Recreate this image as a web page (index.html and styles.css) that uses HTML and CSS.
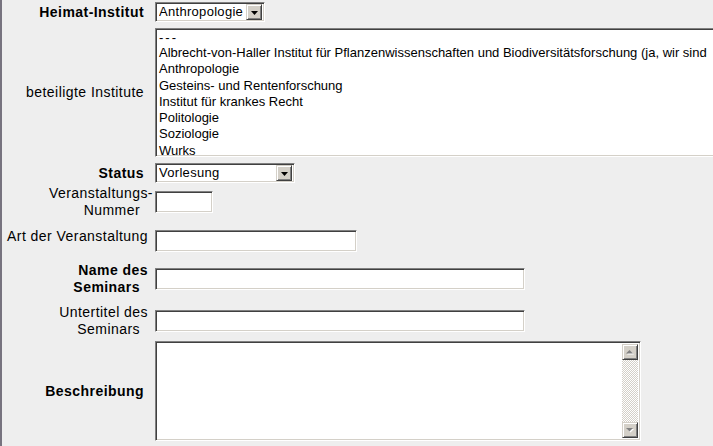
FILE: index.html
```html
<!DOCTYPE html>
<html lang="de">
<head>
<meta charset="utf-8">
<title>Seminar</title>
<link rel="stylesheet" href="styles.css">
</head>
<body>
<form class="form">
  <div class="row r1">
    <div class="label bold">Heimat-Institut</div>
    <div class="select sel-heimat">
      <span class="sel-val">Anthropologie</span>
      <span class="sel-btn"><svg width="7" height="4" viewBox="0 0 7 4"><polygon points="0,0 7,0 3.5,4" fill="#000"/></svg></span>
    </div>
  </div>
  <div class="row r2">
    <div class="label">beteiligte Institute</div>
    <div class="listbox">
      <div class="opt dashes">---</div>
      <div class="opt">Albrecht-von-Haller Institut für Pflanzenwissenschaften und Biodiversitätsforschung (ja, wir sind</div>
      <div class="opt">Anthropologie</div>
      <div class="opt">Gesteins- und Rentenforschung</div>
      <div class="opt">Institut für krankes Recht</div>
      <div class="opt">Politologie</div>
      <div class="opt">Soziologie</div>
      <div class="opt">Wurks</div>
    </div>
  </div>
  <div class="row r3">
    <div class="label bold">Status</div>
    <div class="select sel-status">
      <span class="sel-val">Vorlesung</span>
      <span class="sel-btn"><svg width="7" height="4" viewBox="0 0 7 4"><polygon points="0,0 7,0 3.5,4" fill="#000"/></svg></span>
    </div>
  </div>
  <div class="row r4">
    <div class="label tight"><span class="over">Veranstaltungs-</span><br><span class="tail">Nummer</span></div>
    <input class="field w-nr" type="text">
  </div>
  <div class="row r5">
    <div class="label tight">Art der Veranstaltung</div>
    <input class="field w-art" type="text">
  </div>
  <div class="row r6">
    <div class="label tight bold">Name des<br><span class="tail">Seminars</span></div>
    <input class="field w-long" type="text">
  </div>
  <div class="row r7">
    <div class="label tight">Untertitel des<br><span class="tail">Seminars</span></div>
    <input class="field w-long" type="text">
  </div>
  <div class="row r8">
    <div class="label bold">Beschreibung</div>
    <div class="textarea">
      <div class="ta-body"></div>
      <div class="scrollbar">
        <span class="sb-btn"><svg width="8" height="5" viewBox="0 0 8 5"><polygon points="1,4.5 8,4.5 4.5,1" fill="#fff"/><polygon points="0,3.5 7,3.5 3.5,0" fill="#808080"/></svg></span>
        <span class="sb-track"></span>
        <span class="sb-btn"><svg width="8" height="5" viewBox="0 0 8 5"><polygon points="1,1 8,1 4.5,4.5" fill="#fff"/><polygon points="0,0 7,0 3.5,3.5" fill="#808080"/></svg></span>
      </div>
    </div>
  </div>
</form>
</body>
</html>
```
FILE: styles.css
```css
html, body {
  height: 100%;
}
body {
  margin: 0;
  background: #eeeeee;
  border-left: 2px solid #77737f;
  box-sizing: border-box;
  font-family: "Liberation Sans", Arial, sans-serif;
  color: #000;
  overflow: hidden;
}
.form {
  display: flex;
  flex-direction: column;
}
.row {
  display: flex;
  align-items: center;
}
.label {
  flex: none;
  width: 151px;
  box-sizing: border-box;
  padding-right: 9px;
  margin-right: 2px;
  text-align: right;
  font-size: 14px;
  letter-spacing: 0.45px;
  line-height: 17px;
  white-space: nowrap;
}
.label.tight {
  padding-right: 5px;
}
.bold {
  font-weight: bold;
}
.over {
  margin-right: -5px;
}
.tail {
  margin-right: 8px;
}

/* rows */
.r1 { margin-top: 2px; }
.r2 { margin-top: 6px; }
.r3 { margin-top: 6px; }
.r4 { margin-top: 2px; }
.r5 { margin-top: 9px; align-items: flex-start; }
.r5 .field { margin-top: 2px; }
.r6 { margin-top: 10px; }
.r7 { margin-top: 8px; }
.r8 { margin-top: 3px; }

/* sunken border shared */
.select, .listbox, .field, .textarea {
  box-sizing: border-box;
  background: #fff;
  border: 1px solid;
  border-color: #808080 #ffffff #ffffff #808080;
  box-shadow: inset 1px 1px #404040, inset -1px -1px #d4d0c8;
}

/* select */
.select {
  flex: none;
  height: 20px;
  display: flex;
  align-items: center;
  padding: 2px 2px 2px 3px;
  font-size: 13px;
  letter-spacing: 0.3px;
  line-height: 16px;
}
.sel-heimat { width: 110px; }
.sel-status { width: 140px; }
.sel-val {
  flex: 1;
  overflow: hidden;
  white-space: nowrap;
}
.sel-btn, .sb-btn {
  flex: none;
  box-sizing: border-box;
  width: 16px;
  height: 16px;
  background: #d4d0c8;
  border: 1px solid;
  border-color: #d4d0c8 #404040 #404040 #d4d0c8;
  box-shadow: inset 1px 1px #fff, inset -1px -1px #808080;
  display: flex;
  align-items: center;
  justify-content: center;
}
.sel-btn svg {
  display: block;
  margin-top: 1px;
}

/* listbox: runs to the window edge, its right side is out of view */
.listbox {
  flex: none;
  width: 558px;
  height: 129px;
  border-right: 0;
  padding: 1px 0 2px 3px;
  font-size: 13px;
  line-height: 16.3px;
  overflow: hidden;
  box-shadow: inset 1px 1px #404040, inset 0 -1px #d4d0c8;
}
.opt {
  white-space: nowrap;
}
.dashes {
  letter-spacing: 2px;
  line-height: 15px;
}

/* text inputs */
.field {
  flex: none;
  height: 22px;
  padding: 0 3px;
  font: 13px "Liberation Sans", Arial, sans-serif;
  outline: none;
}
.w-nr { width: 58px; }
.w-art { width: 202px; }
.w-long { width: 370px; }

/* textarea */
.textarea {
  flex: none;
  width: 486px;
  height: 100px;
  padding: 2px;
  display: flex;
}
.ta-body {
  flex: 1;
}
.scrollbar {
  flex: none;
  width: 16px;
  display: flex;
  flex-direction: column;
}
.sb-track {
  flex: 1;
  background: repeating-conic-gradient(#d4d0c8 0 25%, #ffffff 0 50%) 0 0 / 2px 2px;
}
.sb-btn svg {
  display: block;
}
```
